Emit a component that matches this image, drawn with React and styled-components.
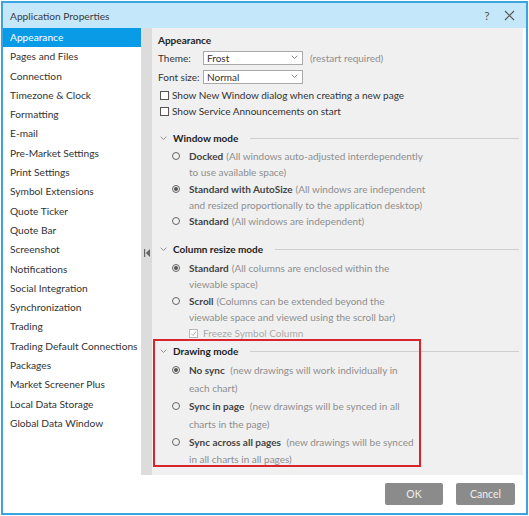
import React from "react";
import styled, { createGlobalStyle } from "styled-components";

const GlobalStyle = createGlobalStyle`
  html, body {
    margin: 0;
    padding: 0;
    background: #ffffff;
  }

  body {
    font-family: Lato, "Liberation Sans", sans-serif;
    font-size: 10px;
    color: #333;
  }
`;

const Dialog = styled.div`
  width: 527px;
  height: 514px;
  margin: 1px;
  box-sizing: border-box;
  border: 2px solid #3ba3dd;
  display: flex;
  flex-direction: column;
  background: #fff;
`;

const TitleBar = styled.div`
  height: 25px;
  background: #c4e8fa;
  display: flex;
  align-items: center;
  padding: 0 8px 0 7px;
  color: #3a3a3a;
  font-size: 10.2px;
`;

const TitleText = styled.div`
  flex: 1;
`;

const TitleButton = styled.div`
  width: 18px;
  display: flex;
  justify-content: center;
  align-items: center;
  color: #555;
  font-size: 12px;
  margin-left: 4px;
`;

const Main = styled.div`
  display: flex;
  height: 447px;
`;

const Sidebar = styled.div`
  width: 138px;
  background: #fff;
`;

const NavItem = styled.div`
  height: 19.3px;
  line-height: 19.3px;
  padding-left: 7px;
  white-space: nowrap;
  font-size: 10.2px;
  color: ${(p) => (p.$active ? "#fff" : "#333")};
  background: ${(p) => (p.$active ? "#0a9be6" : "transparent")};
`;

const Gutter = styled.div`
  width: 11px;
  background: #dcdcdc;
  display: flex;
  align-items: center;
  justify-content: center;
  padding-top: 2px;
`;

const Content = styled.div`
  flex: 1;
  background: #f0f0f0;
  margin-right: 3px;
  padding: 4px 4px 0 6px;
  box-sizing: border-box;
`;

const Heading = styled.div`
  font-weight: 700;
  color: #222;
  line-height: 16px;
`;

const FieldRow = styled.div`
  display: flex;
  align-items: center;
  height: 19px;
`;

const FieldLabel = styled.div`
  width: 45px;
`;

const Select = styled.div`
  width: 100px;
  height: 14px;
  box-sizing: border-box;
  border: 1px solid #a9a9a9;
  background: #fff;
  display: flex;
  align-items: center;
  justify-content: space-between;
  padding: 0 4px 0 3px;
`;

const Hint = styled.div`
  color: #8e8e8e;
  margin-left: 7px;
`;

const CheckRow = styled.div`
  display: flex;
  align-items: center;
  height: 16px;
  padding-left: ${(p) => p.$indent || 2}px;
  color: ${(p) => (p.$disabled ? "#aaa" : "#333")};
  white-space: nowrap;
`;

const Box = styled.div`
  width: 9px;
  height: 9px;
  box-sizing: border-box;
  border: 1px solid ${(p) => (p.$disabled ? "#b8b8b8" : "#555")};
  margin-right: ${(p) => p.$gap || 3}px;
  background: #fff;
  display: flex;
  align-items: center;
  justify-content: center;
`;

const Section = styled.div`
  position: relative;
  margin-top: ${(p) => p.$top}px;
`;

const SectionHeader = styled.div`
  display: flex;
  align-items: center;
  height: 16px;
  padding-left: 2px;
`;

const SectionTitle = styled.div`
  font-weight: 700;
  color: #222;
  margin-left: 6px;
  margin-right: 12px;
  white-space: nowrap;
`;

const Rule = styled.div`
  flex: 1;
  height: 1px;
  background: #cfcfcf;
`;

const Options = styled.div`
  padding-left: 14px;
  margin-top: ${(p) => p.$top || 2}px;
`;

const OptionLine = styled.div`
  display: flex;
  align-items: center;
  height: ${(p) => p.$h}px;
  padding-left: ${(p) => (p.$cont ? 17 : 0)}px;
  white-space: pre;
  color: #8e8e8e;
`;

const Radio = styled.div`
  width: 8px;
  height: 8px;
  box-sizing: border-box;
  border-radius: 50%;
  border: 1px solid #666;
  margin-right: 9px;
  display: flex;
  align-items: center;
  justify-content: center;
  &::after {
    content: "";
    width: 4px;
    height: 4px;
    border-radius: 50%;
    background: ${(p) => (p.$checked ? "#555" : "transparent")};
  }
`;

const OptionName = styled.span`
  color: #444;
  font-weight: 700;
  margin-right: 3px;
`;

const Highlight = styled.div`
  position: absolute;
  left: -5px;
  top: -4px;
  width: 268px;
  height: 128px;
  box-sizing: border-box;
  border: 2px solid #d9232d;
  pointer-events: none;
`;

const Footer = styled.div`
  flex: 1;
  display: flex;
  justify-content: flex-end;
  align-items: flex-start;
  padding: 8px 11px 0 0;
  gap: 13px;
`;

const Button = styled.div`
  width: ${(p) => p.$w}px;
  height: 22px;
  border-radius: 2px;
  background: #8b8b8b;
  color: #eeeeee;
  display: flex;
  align-items: center;
  justify-content: center;
  font-size: 10.5px;
`;

const Chevron = ({ size = 7, color = "#777" }) => (
  <svg width={size} height={size * 0.6} viewBox="0 0 10 6">
    <polyline points="1,1 5,5 9,1" fill="none" stroke={color} strokeWidth="1.3" />
  </svg>
);

const navItems = [
  "Appearance",
  "Pages and Files",
  "Connection",
  "Timezone & Clock",
  "Formatting",
  "E-mail",
  "Pre-Market Settings",
  "Print Settings",
  "Symbol Extensions",
  "Quote Ticker",
  "Quote Bar",
  "Screenshot",
  "Notifications",
  "Social Integration",
  "Synchronization",
  "Trading",
  "Trading Default Connections",
  "Packages",
  "Market Screener Plus",
  "Local Data Storage",
  "Global Data Window",
];

const windowModes = [
  { name: "Docked", lines: ["(All windows auto-adjusted interdependently", "to use available space)"] },
  { name: "Standard with AutoSize", checked: true, lines: ["(All windows are independent", "and resized proportionally to the application desktop)"] },
  { name: "Standard", lines: ["(All windows are independent)"] },
];

const columnModes = [
  { name: "Standard", checked: true, lines: ["(All columns are enclosed within the", "viewable space)"] },
  { name: "Scroll", lines: ["(Columns can be extended beyond the", "viewable space and viewed using the scroll bar)"] },
];

const drawingModes = [
  { name: "No sync", checked: true, lines: [" (new drawings will work individually in", "each chart)"] },
  { name: "Sync in page", lines: [" (new drawings will be synced in all", "charts in the page)"] },
  { name: "Sync across all pages", lines: [" (new drawings will be synced", "in all charts in all pages)"] },
];

const OptionList = ({ items, h }) =>
  items.map((o) => (
    <React.Fragment key={o.name}>
      <OptionLine $h={h}>
        <Radio $checked={o.checked} />
        <OptionName>{o.name}</OptionName>
        {o.lines[0]}
      </OptionLine>
      {o.lines.slice(1).map((l) => (
        <OptionLine key={l} $h={h} $cont>
          {l}
        </OptionLine>
      ))}
    </React.Fragment>
  ));

const App = () => {
  return (
    <>
      <GlobalStyle />
      <Dialog>
        <TitleBar>
          <TitleText>Application Properties</TitleText>
          <TitleButton>?</TitleButton>
          <TitleButton>
            <svg width="11" height="11" viewBox="0 0 11 11">
              <path d="M1 1 L10 10 M10 1 L1 10" stroke="#555" strokeWidth="1.1" />
            </svg>
          </TitleButton>
        </TitleBar>

        <Main>
          <Sidebar>
            {navItems.map((n, i) => (
              <NavItem key={n} $active={i === 0}>
                {n}
              </NavItem>
            ))}
          </Sidebar>

          <Gutter>
            <svg width="6" height="8" viewBox="0 0 6 8">
              <rect x="0" y="0" width="1.2" height="8" fill="#666" />
              <polygon points="6,0 6,8 1.8,4" fill="#666" />
            </svg>
          </Gutter>

          <Content>
            <Heading>Appearance</Heading>
            <FieldRow>
              <FieldLabel>Theme:</FieldLabel>
              <Select>
                Frost
                <Chevron />
              </Select>
              <Hint>(restart required)</Hint>
            </FieldRow>
            <FieldRow>
              <FieldLabel>Font size:</FieldLabel>
              <Select>
                Normal
                <Chevron />
              </Select>
            </FieldRow>
            <CheckRow style={{ marginTop: 1 }}>
              <Box />
              Show New Window dialog when creating a new page
            </CheckRow>
            <CheckRow>
              <Box />
              Show Service Announcements on start
            </CheckRow>

            <Section $top={11}>
              <SectionHeader>
                <Chevron size={7} color="#888" />
                <SectionTitle>Window mode</SectionTitle>
                <Rule />
              </SectionHeader>
              <Options>
                <OptionList items={windowModes} h={16.3} />
              </Options>
            </Section>

            <Section $top={12}>
              <SectionHeader>
                <Chevron size={7} color="#888" />
                <SectionTitle>Column resize mode</SectionTitle>
                <Rule />
              </SectionHeader>
              <Options>
                <OptionList items={columnModes} h={16.5} />
                <CheckRow $indent={17} $disabled>
                  <Box $disabled $gap={5}>
                    <svg width="7" height="7" viewBox="0 0 7 7">
                      <polyline points="1,3.5 3,5.5 6,1.5" fill="none" stroke="#b0b0b0" strokeWidth="1" />
                    </svg>
                  </Box>
                  Freeze Symbol Column
                </CheckRow>
              </Options>
            </Section>

            <Section $top={2}>
              <Highlight />
              <SectionHeader>
                <Chevron size={7} color="#888" />
                <SectionTitle>Drawing mode</SectionTitle>
                <Rule />
              </SectionHeader>
              <Options>
                <OptionList items={drawingModes} h={17.8} />
              </Options>
            </Section>
          </Content>
        </Main>

        <Footer>
          <Button $w={58}>OK</Button>
          <Button $w={59}>Cancel</Button>
        </Footer>
      </Dialog>
    </>
  );
};

export default App;
